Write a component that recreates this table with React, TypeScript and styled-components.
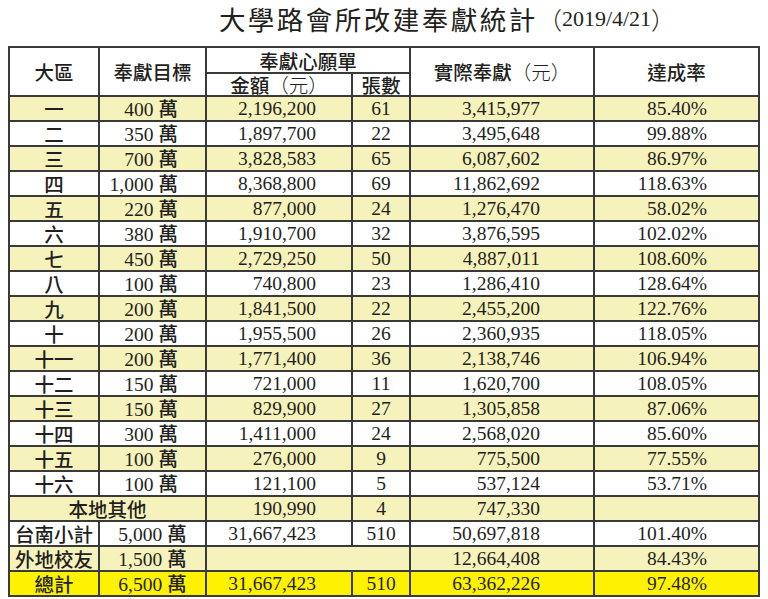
import React from "react";
import styled, { createGlobalStyle } from "styled-components";

const GlobalStyle = createGlobalStyle`
  html, body {
    margin: 0;
    padding: 0;
    background: #ffffff;
  }
  body {
    font-family: "Liberation Serif", "Noto Sans CJK TC", serif;
    color: #231f20;
  }
`;

const LIGHT = "#f6f2bb";
const BRIGHT = "#fff200";
const LINE = "#3a3a3a";

const Page = styled.div`
  width: 768px;
  height: 599px;
  overflow: hidden;
  display: flex;
  flex-direction: column;
`;

const TitleBar = styled.div`
  height: 46px;
  display: flex;
  justify-content: center;
  align-items: center;
  padding-left: 126px;
  padding-bottom: 8px;
  box-sizing: border-box;
  white-space: nowrap;
`;

const TitleMain = styled.span`
  font-family: "Noto Sans CJK TC", sans-serif;
  font-size: 26.5px;
  font-weight: 400;
  letter-spacing: 2.5px;
  line-height: 38px;
`;

const TitleDate = styled.span`
  font-family: "Liberation Serif", "Noto Sans CJK TC", serif;
  font-size: 22px;
  line-height: 38px;
`;

const Paren = styled.span`
  font-family: "Noto Sans CJK TC", sans-serif;
  font-size: 24px;
  font-weight: 300;
  line-height: 38px;
`;

const TableWrap = styled.div`
  padding-left: 8px;
`;

const Table = styled.table`
  width: 750px;
  table-layout: fixed;
  border-collapse: collapse;
  border: 2px solid ${LINE};
`;

const HeadCell = styled.th<{ $h: number }>`
  height: ${(p) => p.$h}px;
  padding: 0;
  border: 2px solid ${LINE};
  font-family: "Noto Sans CJK TC", sans-serif;
  font-weight: 500;
  font-size: 19.5px;
  line-height: 21px;
  text-align: center;
  vertical-align: middle;
  white-space: nowrap;
  color: #231f20;
  background: #ffffff;
`;

const Light = styled.span`
  font-weight: 300;
`;

type Tone = "light" | "white" | "bright";

const Row = styled.tr<{ $tone: Tone }>`
  background: ${(p) =>
    p.$tone === "light" ? LIGHT : p.$tone === "bright" ? BRIGHT : "#ffffff"};
`;

const Cell = styled.td<{ $align?: "center" | "right"; $pr?: number; $cjk?: boolean }>`
  height: 23px;
  padding: 0 ${(p) => (p.$align === "right" ? p.$pr ?? 0 : 0)}px 0 0;
  border: 2px solid ${LINE};
  font-family: ${(p) =>
    p.$cjk
      ? `"Noto Sans CJK TC", sans-serif`
      : `"Liberation Serif", "Noto Sans CJK TC", serif`};
  font-weight: ${(p) => (p.$cjk ? 500 : 400)};
  font-size: 19.5px;
  line-height: 21px;
  text-align: ${(p) => p.$align ?? "center"};
  vertical-align: middle;
  white-space: nowrap;
`;

const Wan = styled.span`
  font-family: "Noto Sans CJK TC", sans-serif;
  font-weight: 500;
  margin-left: 5px;
`;

const rows: string[][] = [
  ["一", "400", "2,196,200", "61", "3,415,977", "85.40%"],
  ["二", "350", "1,897,700", "22", "3,495,648", "99.88%"],
  ["三", "700", "3,828,583", "65", "6,087,602", "86.97%"],
  ["四", "1,000", "8,368,800", "69", "11,862,692", "118.63%"],
  ["五", "220", "877,000", "24", "1,276,470", "58.02%"],
  ["六", "380", "1,910,700", "32", "3,876,595", "102.02%"],
  ["七", "450", "2,729,250", "50", "4,887,011", "108.60%"],
  ["八", "100", "740,800", "23", "1,286,410", "128.64%"],
  ["九", "200", "1,841,500", "22", "2,455,200", "122.76%"],
  ["十", "200", "1,955,500", "26", "2,360,935", "118.05%"],
  ["十一", "200", "1,771,400", "36", "2,138,746", "106.94%"],
  ["十二", "150", "721,000", "11", "1,620,700", "108.05%"],
  ["十三", "150", "829,900", "27", "1,305,858", "87.06%"],
  ["十四", "300", "1,411,000", "24", "2,568,020", "85.60%"],
  ["十五", "100", "276,000", "9", "775,500", "77.55%"],
  ["十六", "100", "121,100", "5", "537,124", "53.71%"],
];

const Goal = ({ v }: { v: string }) => (
  <>
    {v}
    <Wan>萬</Wan>
  </>
);

export default function App() {
  return (
    <>
      <GlobalStyle />
      <Page>
        <TitleBar>
          <TitleMain>大學路會所改建奉獻統計</TitleMain>
          <Paren>（</Paren>
          <TitleDate>2019/4/21</TitleDate>
          <Paren>）</Paren>
        </TitleBar>
        <TableWrap>
          <Table>
            <colgroup>
              <col style={{ width: 90 }} />
              <col style={{ width: 107 }} />
              <col style={{ width: 146 }} />
              <col style={{ width: 58 }} />
              <col style={{ width: 184 }} />
              <col style={{ width: 165 }} />
            </colgroup>
            <thead>
              <tr>
                <HeadCell $h={24} rowSpan={2}>大區</HeadCell>
                <HeadCell $h={24} rowSpan={2}>奉獻目標</HeadCell>
                <HeadCell $h={24} colSpan={2}>奉獻心願單</HeadCell>
                <HeadCell $h={24} rowSpan={2}>
                  實際奉獻<Light>（元）</Light>
                </HeadCell>
                <HeadCell $h={24} rowSpan={2}>達成率</HeadCell>
              </tr>
              <tr>
                <HeadCell $h={21}>
                  金額<Light>（元）</Light>
                </HeadCell>
                <HeadCell $h={21}>張數</HeadCell>
              </tr>
            </thead>
            <tbody>
              {rows.map((r, i) => (
                <Row key={r[0]} $tone={i % 2 === 0 ? "light" : "white"}>
                  <Cell $cjk>{r[0]}</Cell>
                  <Cell $align="right" $pr={27}>
                    <Goal v={r[1]} />
                  </Cell>
                  <Cell $align="right" $pr={35}>{r[2]}</Cell>
                  <Cell>{r[3]}</Cell>
                  <Cell $align="right" $pr={53}>{r[4]}</Cell>
                  <Cell $align="right" $pr={51}>{r[5]}</Cell>
                </Row>
              ))}
              <Row $tone="light">
                <Cell $cjk colSpan={2}>本地其他</Cell>
                <Cell $align="right" $pr={35}>190,990</Cell>
                <Cell>4</Cell>
                <Cell $align="right" $pr={53}>747,330</Cell>
                <Cell />
              </Row>
              <Row $tone="white">
                <Cell $cjk>台南小計</Cell>
                <Cell>
                  <Goal v="5,000" />
                </Cell>
                <Cell $align="right" $pr={35}>31,667,423</Cell>
                <Cell>510</Cell>
                <Cell $align="right" $pr={53}>50,697,818</Cell>
                <Cell $align="right" $pr={51}>101.40%</Cell>
              </Row>
              <Row $tone="light">
                <Cell $cjk>外地校友</Cell>
                <Cell>
                  <Goal v="1,500" />
                </Cell>
                <Cell colSpan={2} />
                <Cell $align="right" $pr={53}>12,664,408</Cell>
                <Cell $align="right" $pr={51}>84.43%</Cell>
              </Row>
              <Row $tone="bright">
                <Cell $cjk>總計</Cell>
                <Cell>
                  <Goal v="6,500" />
                </Cell>
                <Cell $align="right" $pr={35}>31,667,423</Cell>
                <Cell>510</Cell>
                <Cell $align="right" $pr={53}>63,362,226</Cell>
                <Cell $align="right" $pr={51}>97.48%</Cell>
              </Row>
            </tbody>
          </Table>
        </TableWrap>
      </Page>
    </>
  );
}
